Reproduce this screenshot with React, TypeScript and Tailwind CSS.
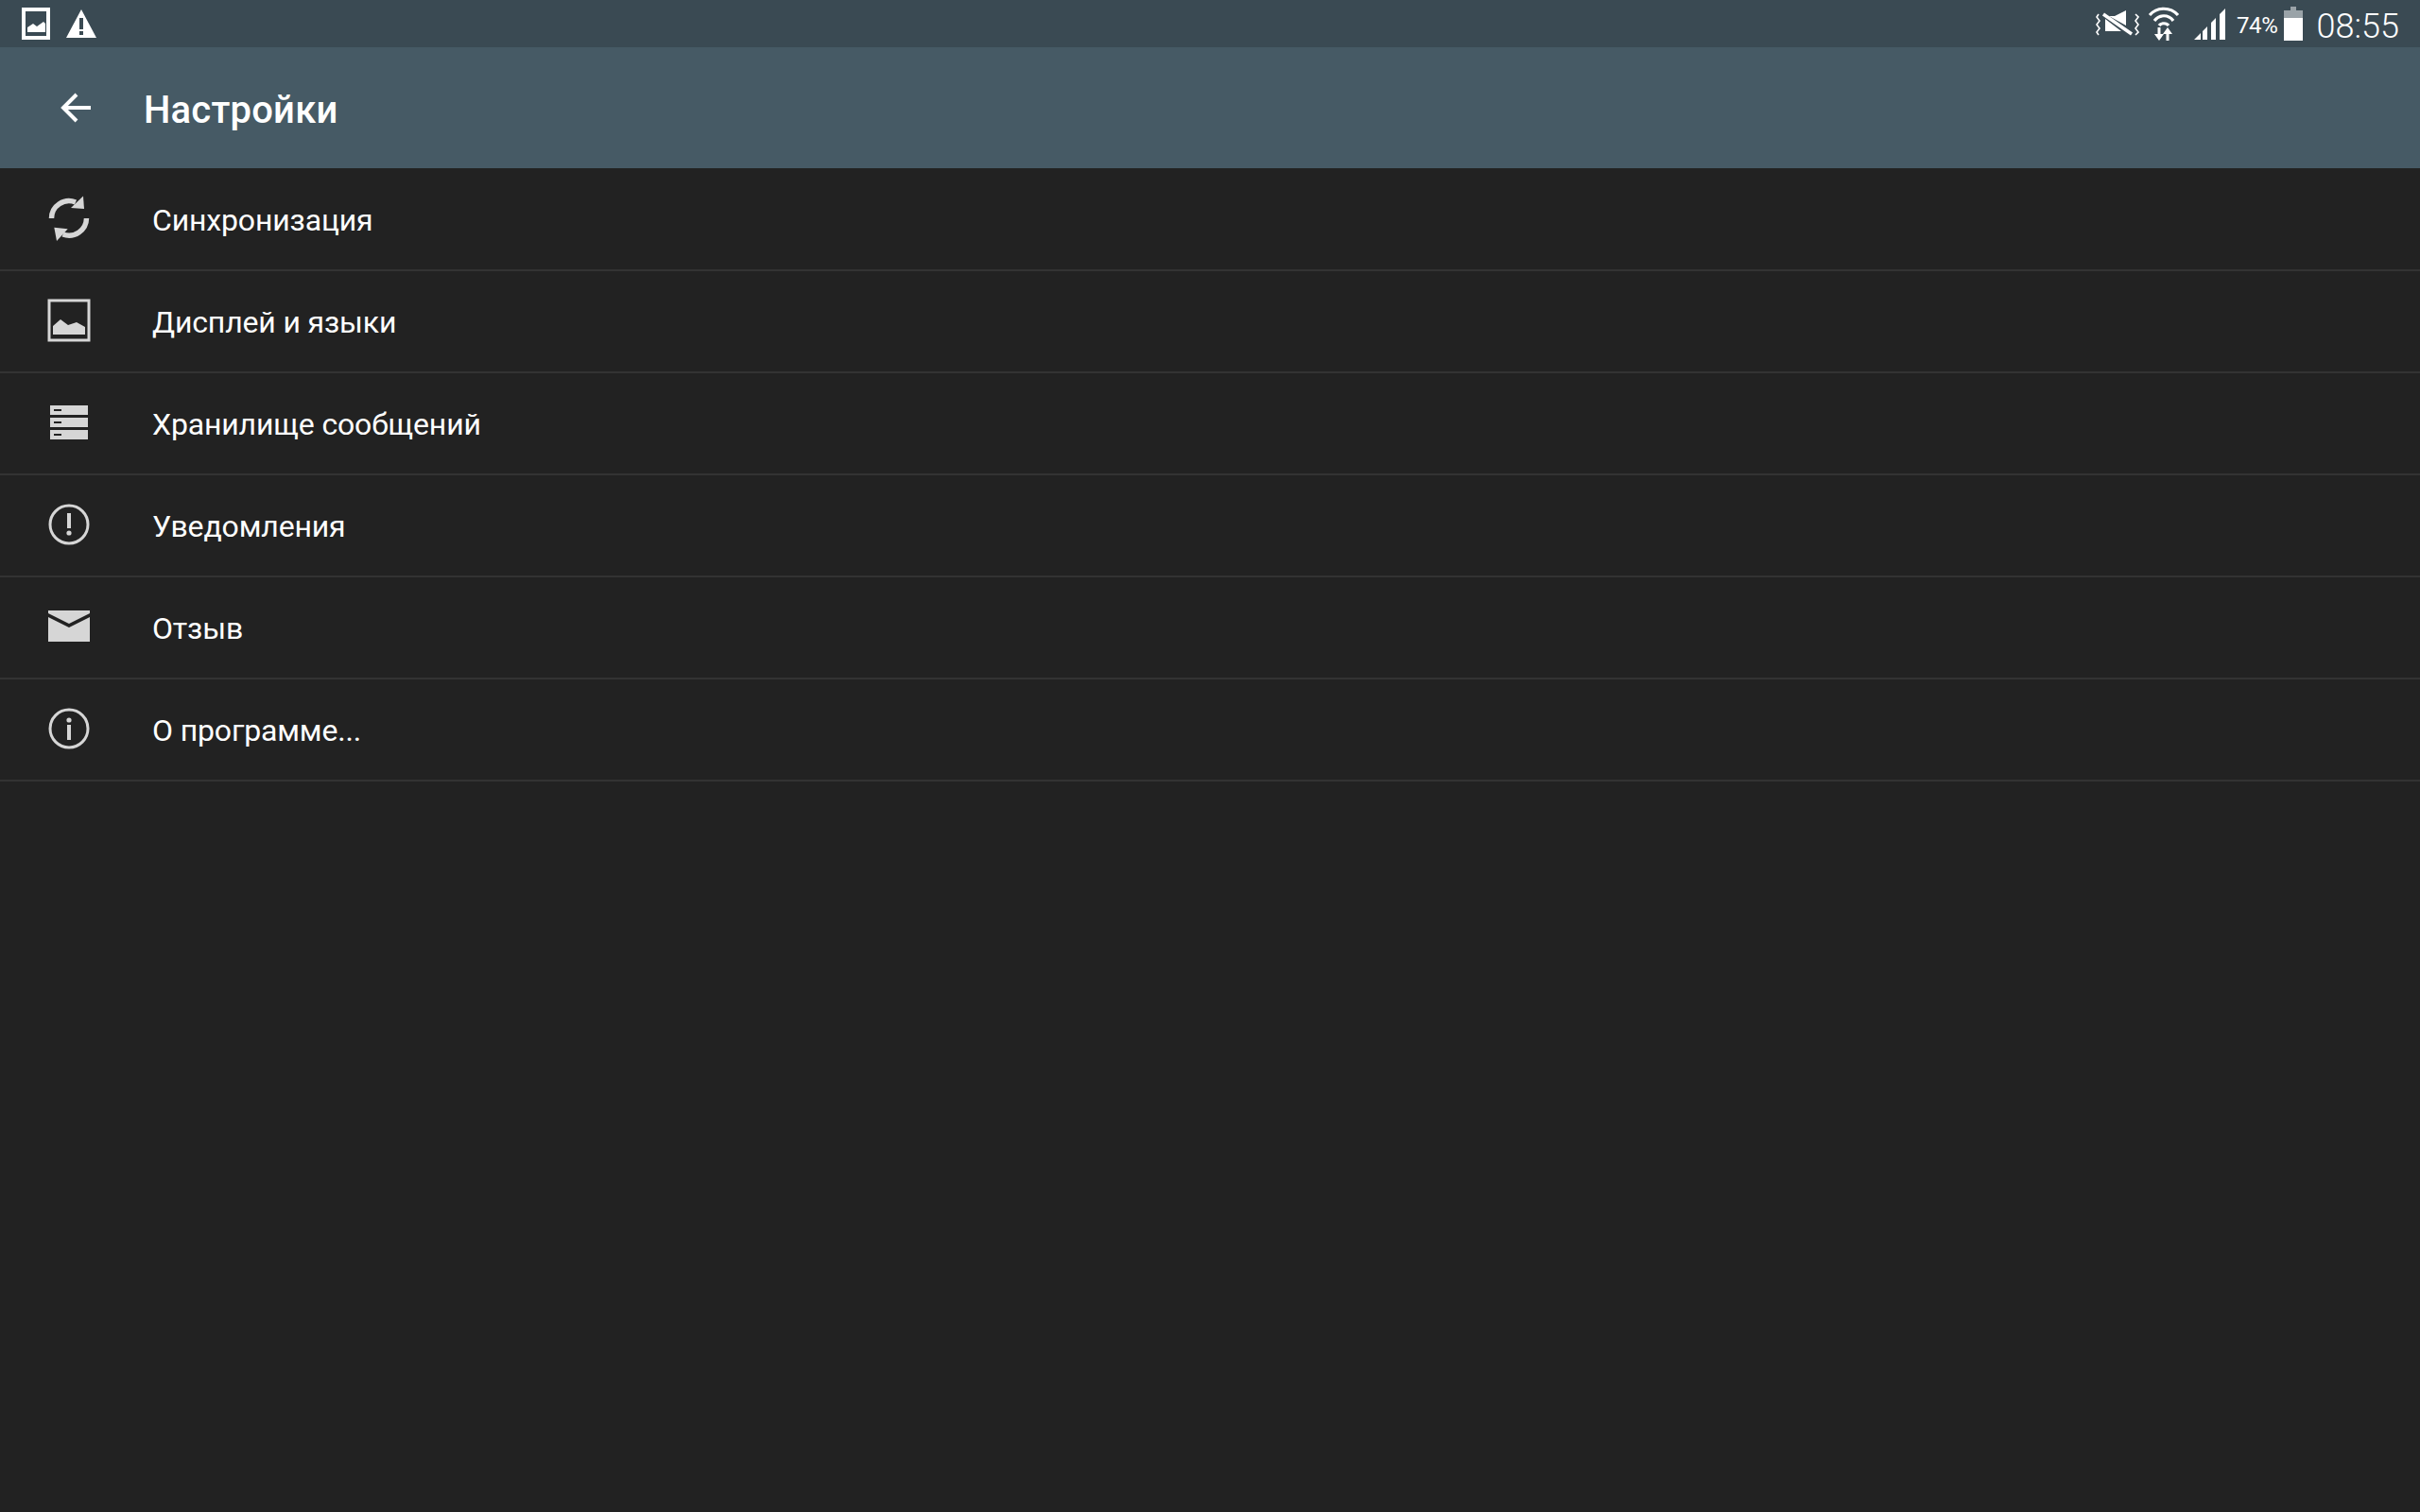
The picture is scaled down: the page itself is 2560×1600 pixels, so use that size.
import type { ReactNode } from 'react';

const rows: { label: string; icon: ReactNode }[] = [
  {
    label: 'Синхронизация',
    icon: (
      <svg viewBox="0 0 48 48" className="w-12 h-12">
        <path d="M5.5 24 A18.5 18.5 0 0 1 31 7" fill="none" stroke="#d6d6d6" strokeWidth="5.5" />
        <path d="M39 0.5 L40 14 L26 13 Z" fill="#d6d6d6" />
        <path d="M42.5 24 A18.5 18.5 0 0 1 17.5 41" fill="none" stroke="#d6d6d6" strokeWidth="5.5" />
        <path d="M11 48 L8.3 33.7 L22.7 35.3 Z" fill="#d6d6d6" />
      </svg>
    ),
  },
  {
    label: 'Дисплей и языки',
    icon: (
      <svg viewBox="0 0 48 48" className="w-12 h-12">
        <rect x="3" y="3" width="42" height="42" fill="none" stroke="#d6d6d6" strokeWidth="3" />
        <path d="M7 39 V30 L15 23 L23 29 L32 26 L41 31 V39 Z" fill="#d6d6d6" />
      </svg>
    ),
  },
  {
    label: 'Хранилище сообщений',
    icon: (
      <svg viewBox="0 0 48 48" className="w-12 h-12">
        <path
          fillRule="evenodd"
          d="M4 6 H44 V16 H4 Z M8 10 V12 H16 V10 Z M4 19 H44 V29 H4 Z M8 23 V25 H16 V23 Z M4 32 H44 V42 H4 Z M8 36 V38 H16 V36 Z"
          fill="#d6d6d6"
        />
      </svg>
    ),
  },
  {
    label: 'Уведомления',
    icon: (
      <svg viewBox="0 0 48 48" className="w-12 h-12">
        <circle cx="24" cy="24" r="20" fill="none" stroke="#d6d6d6" strokeWidth="3" />
        <rect x="22" y="12" width="4" height="16" fill="#d6d6d6" />
        <circle cx="24" cy="33" r="2.6" fill="#d6d6d6" />
      </svg>
    ),
  },
  {
    label: 'Отзыв',
    icon: (
      <svg viewBox="0 0 48 48" className="w-12 h-12">
        <path d="M2 7 H46 V10 L24 21 L2 10 Z" fill="#d6d6d6" />
        <path d="M2 14 L24 25 L46 14 V40 H2 Z" fill="#d6d6d6" />
      </svg>
    ),
  },
  {
    label: 'О программе...',
    icon: (
      <svg viewBox="0 0 48 48" className="w-12 h-12">
        <circle cx="24" cy="24" r="20" fill="none" stroke="#d6d6d6" strokeWidth="3" />
        <circle cx="24" cy="15" r="2.6" fill="#d6d6d6" />
        <rect x="22" y="20" width="4" height="16" fill="#d6d6d6" />
      </svg>
    ),
  },
];

function StatusBar() {
  return (
    <div className="h-[50px] bg-[#3a4a53] flex items-center justify-between pl-[23px] pr-[22px] text-white">
      <div className="flex items-center gap-[17px]">
        <svg viewBox="0 0 30 34" className="w-[30px] h-[34px]">
          <rect x="2" y="2" width="26" height="30" fill="none" stroke="#fff" strokeWidth="4" />
          <path d="M6 26 V21 L12 17 L16 20 L23 15 L25 17 V26 Z" fill="#fff" />
        </svg>
        <svg viewBox="0 0 32 30" className="w-[32px] h-[30px]">
          <path fillRule="evenodd" d="M16 0 L32 30 H0 Z M14 9 V21 H18 V9 Z M14 23 V27 H18 V23 Z" fill="#fff" />
        </svg>
      </div>
      <div className="flex items-center">
        <svg viewBox="0 0 46 36" className="w-[46px] h-[36px]">
          <path d="M14 10 H20 L32 4 V20 Z M10 13 L27 26 H20 L10 26 Z" fill="#fff" />
          <path d="M8 8 L38 29" stroke="#fff" strokeWidth="3.5" />
          <path d="M3 8 L1 11 L4 15 L1 19 L4 23 L1 27 L3 30 M42 8 L45 11 L42 15 L45 19 L42 23 L45 27 L42 30" fill="none" stroke="#fff" strokeWidth="1.6" />
        </svg>
        <svg viewBox="0 0 36 36" className="w-[36px] h-[36px] ml-[8px]">
          <path d="M3 9 C11 0 25 0 33 9 M8 15 C13 8 23 8 28 15 M13 20 C15 17 21 17 23 20" fill="none" stroke="#fff" strokeWidth="3.2" />
          <path d="M11.5 22 H14.5 V29 H18 L13 36 L8 29 H11.5 Z M20.5 36 H23.5 V29 H27 L22 22 L17 29 H20.5 Z" fill="#fff" />
        </svg>
        <svg viewBox="0 0 33 33" className="w-[33px] h-[33px] ml-[14px]">
          <path d="M0 33 L7 26 V33 Z M9 33 V24 L14 19 V33 Z M18 33 V15 L23 10 V33 Z M27 33 V6 L33 0 V33 Z" fill="#fff" />
        </svg>
        <span className="ml-[12px] mt-[3px] text-[24px] leading-none tracking-[-0.3px] font-['Roboto',sans-serif]">74%</span>
        <div className="ml-[6px] w-[20px] h-[36px] flex flex-col items-center">
          <div className="w-[6px] h-[4px] bg-[#9aa3a8]" />
          <div className="w-[20px] h-[8px] bg-[#9aa3a8]" />
          <div className="w-[20px] flex-1 bg-white" />
        </div>
        <span className="ml-[15px] mt-[6px] text-[36px] leading-none font-light font-['Roboto',sans-serif]">08:55</span>
      </div>
    </div>
  );
}

export default function App() {
  return (
    <div className="w-full min-h-[1600px] bg-[#222222] font-['Roboto',sans-serif]">
      <StatusBar />
      <div className="h-[128px] bg-[#465a65] flex items-center">
        <svg viewBox="0 0 32 32" className="w-[32px] h-[32px] ml-[64px]">
          <path d="M32 16 H4 M17 2 L3 16 L17 30" fill="none" stroke="#fff" strokeWidth="4" />
        </svg>
        <h1 className="ml-[56px] mt-[6px] text-[40px] font-medium tracking-[0.2px] text-white">Настройки</h1>
      </div>
      <div className="pt-[1px]">
        {rows.map((row) => (
          <div key={row.label} className="h-[108px] flex items-center border-b-2 border-[#333333]">
            <div className="w-[48px] h-[48px] ml-[49px] mb-[3px] shrink-0">{row.icon}</div>
            <span className="ml-[64px] mt-[2px] text-[32px] tracking-[-0.15px] text-white">{row.label}</span>
          </div>
        ))}
      </div>
    </div>
  );
}
